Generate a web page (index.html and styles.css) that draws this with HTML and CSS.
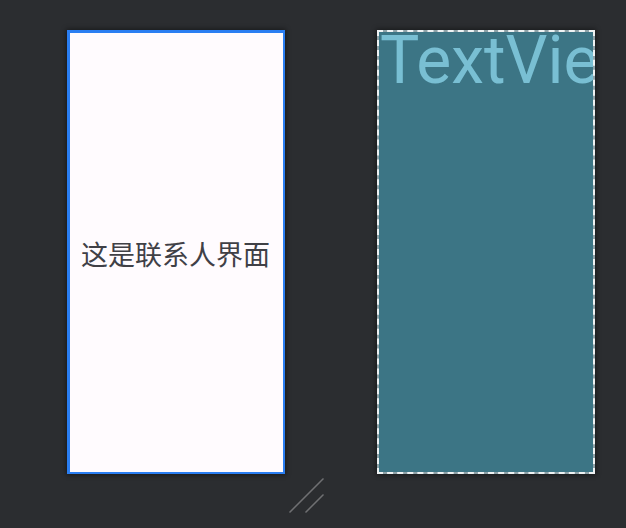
FILE: index.html
```html
<!DOCTYPE html>
<html>
<head>
<meta charset="utf-8">
<link rel="stylesheet" href="styles.css">
</head>
<body>
<div class="canvas">
  <div class="screens">
    <div class="screen design">
      <div class="label">这是联系人界面</div>
    </div>
    <div class="screen blueprint">
      <div class="tv">TextView</div>
    </div>
  </div>
  <div class="handle">
    <svg width="40" height="40" viewBox="0 0 40 40">
      <line x1="1.5" y1="35.5" x2="35.5" y2="1.5" stroke="#6f7072" stroke-width="1.5"/>
      <line x1="17.5" y1="35.5" x2="35.5" y2="17.5" stroke="#6f7072" stroke-width="1.5"/>
    </svg>
  </div>
</div>
</body>
</html>
```
FILE: styles.css
```css
html, body {
  margin: 0;
  padding: 0;
  background: #2b2d30;
  width: 626px;
  height: 528px;
  overflow: hidden;
}
.canvas {
  padding: 30px 0 0 67px;
}
.screens {
  display: flex;
  gap: 92px;
}
.screen {
  width: 218px;
  height: 444px;
  box-sizing: border-box;
  box-shadow: 0 0 5px 1px rgba(0, 0, 0, 0.45);
  overflow: hidden;
}
.design {
  background: #fffbfe;
  border: 3px solid #2a7ef2;
  border-right-width: 2px;
  border-bottom-width: 2px;
  display: flex;
  align-items: center;
  justify-content: center;
}
.label {
  font-family: "Noto Sans CJK SC", sans-serif;
  font-size: 27px;
  color: #404046;
  margin-top: 2px;
  margin-left: -2px;
  white-space: nowrap;
}
.blueprint {
  border: 2px dashed #eef2f3;
  background: linear-gradient(#3c7585, #3c7585) padding-box, #8fa3a9 border-box;
}
.tv {
  font-family: Roboto, "Liberation Sans", sans-serif;
  font-size: 66px;
  line-height: 57px;
  color: #79bfd3;
  padding-left: 1px;
  white-space: nowrap;
}
.handle {
  margin: 3px 0 0 221px;
  width: 40px;
  height: 40px;
}
.handle svg {
  display: block;
}
```
